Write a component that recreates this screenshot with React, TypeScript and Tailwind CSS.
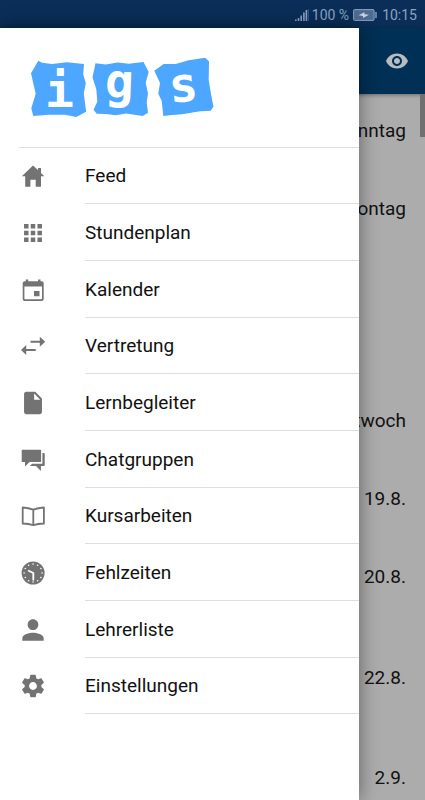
import type { ReactNode } from "react";

interface iconProps {
  children: ReactNode;
  viewBox?: string;
}

const Icon = ({ children, viewBox = "-0.5 -0.5 28 28" }: iconProps) => {
  return (
    <svg viewBox={viewBox} className="w-7 h-7 fill-current" aria-hidden="true">
      {children}
    </svg>
  );
};

const clockDots = Array.from({ length: 12 }, (_, i) => {
  const angle = (i * Math.PI) / 6;
  return { x: 13.6 + 9 * Math.sin(angle), y: 13.5 - 9 * Math.cos(angle) };
});

const menuItems = [
  {
    label: "Feed",
    icon: (
      <Icon>
        <path d="M13.5 2.9 2.3 13.7h3.4v10.6h5.2v-7h5.3v7h5.3V13.7h3.3l-3.3-3.2V5.4h-2.9v2.4z" />
      </Icon>
    ),
  },
  {
    label: "Stundenplan",
    icon: (
      <Icon viewBox="-0.5 -0.5 25 25">
        <path d="M4 8h4V4H4v4zm6 12h4v-4h-4v4zm-6 0h4v-4H4v4zm0-6h4v-4H4v4zm6 0h4v-4h-4v4zm6-10v4h4V4h-4zm-6 4h4V4h-4v4zm6 6h4v-4h-4v4zm0 6h4v-4h-4v4z" />
      </Icon>
    ),
  },
  {
    label: "Kalender",
    icon: (
      <Icon>
        <path
          fillRule="evenodd"
          d="M6.3 3h2.4v1.8h9.9V3H21v1.8h1.2a2 2 0 0 1 2 2v15.7a2 2 0 0 1-2 2h-17a2 2 0 0 1-2-2V6.8a2 2 0 0 1 2-2h1.1zM4.9 9.9v12a.8.8 0 0 0 .8.8h16a.8.8 0 0 0 .8-.8v-12zM14.5 14.5H20v5.3h-5.5z"
        />
      </Icon>
    ),
  },
  {
    label: "Vertretung",
    icon: (
      <Icon>
        <path d="M25.7 9.2 20.3 4.2v4H11v2.1h9.3v4zM1.5 17.5l5.2-5v4h9.5v2.1H6.7v4z" />
      </Icon>
    ),
  },
  {
    label: "Lernbegleiter",
    icon: (
      <Icon viewBox="-0.5 -0.5 25 25">
        <path d="M6 2c-1.1 0-1.99.9-1.99 2L4 20c0 1.1.89 2 1.99 2H18c1.1 0 2-.9 2-2V8l-6-6H6zm7 7V3.5L18.5 9H13z" />
      </Icon>
    ),
  },
  {
    label: "Chatgruppen",
    icon: (
      <Icon>
        <path d="M2.9 3.2h18a.7.7 0 0 1 .7.7v11a.7.7 0 0 1-.7.7H10l-4.5 4.5v-4.5H2.9a.7.7 0 0 1-.7-.7v-11a.7.7 0 0 1 .7-.7z" />
        <path d="M22.9 6.5h1.5a.8.8 0 0 1 .8.8v11.5a.8.8 0 0 1-.8.8h-3v4.9l-4.9-4.9h-6.2l2.4-2.4h10.2z" />
      </Icon>
    ),
  },
  {
    label: "Kursarbeiten",
    icon: (
      <Icon>
        <path
          d="M13.8 7.2C10.5 5.9 7 5.2 3.2 5v16c3.8.2 7.3.7 10.6 1.6 3.2-.9 6.7-1.4 10.6-1.6V5c-3.9.2-7.4.9-10.6 2.2zm0 0v15.4"
          fill="none"
          stroke="currentColor"
          strokeWidth="1.8"
          strokeLinejoin="round"
        />
      </Icon>
    ),
  },
  {
    label: "Fehlzeiten",
    icon: (
      <Icon>
        <circle cx="13.6" cy="13.5" r="11.5" />
        {clockDots.map((dot, i) => (
          <circle key={i} cx={dot.x} cy={dot.y} r="0.8" fill="#fff" />
        ))}
        <path
          d="M8.6 11l5.2 2.5v7.4"
          fill="none"
          stroke="#fff"
          strokeWidth="1.8"
        />
      </Icon>
    ),
  },
  {
    label: "Lehrerliste",
    icon: (
      <Icon viewBox="1.5 1.5 21 21">
        <path d="M12 12c2.21 0 4-1.79 4-4s-1.79-4-4-4-4 1.79-4 4 1.79 4 4 4zm0 2c-2.67 0-8 1.34-8 4v2h16v-2c0-2.66-5.33-4-8-4z" />
      </Icon>
    ),
  },
  {
    label: "Einstellungen",
    icon: (
      <Icon viewBox="-0.5 -0.5 25 25">
        <path d="M19.43 12.98c.04-.32.07-.64.07-.98s-.03-.66-.07-.98l2.11-1.65c.19-.15.24-.42.12-.64l-2-3.46c-.12-.22-.39-.3-.61-.22l-2.49 1c-.52-.4-1.08-.73-1.69-.98l-.38-2.65C14.46 2.18 14.25 2 14 2h-4c-.25 0-.46.18-.49.42l-.38 2.65c-.61.25-1.17.59-1.69.98l-2.49-1c-.23-.09-.49 0-.61.22l-2 3.46c-.13.22-.07.49.12.64l2.11 1.65c-.04.32-.07.65-.07.98s.03.66.07.98l-2.11 1.65c-.19.15-.24.42-.12.64l2 3.46c.12.22.39.3.61.22l2.49-1c.52.4 1.08.73 1.69.98l.38 2.65c.03.24.24.42.49.42h4c.25 0 .46-.18.49-.42l.38-2.65c.61-.25 1.17-.59 1.69-.98l2.49 1c.23.09.49 0 .61-.22l2-3.46c.12-.22.07-.49-.12-.64l-2.11-1.65zM12 15.5c-1.93 0-3.5-1.57-3.5-3.5s1.57-3.5 3.5-3.5 3.5 1.57 3.5 3.5-1.57 3.5-3.5 3.5z" />
      </Icon>
    ),
  },
];

const days = [
  { label: "Sonntag", gap: "pt-[25px]" },
  { label: "Montag", gap: "pt-[54px]" },
  { label: "Mittwoch", gap: "pt-[188px]" },
  { label: "19.8.", gap: "pt-[54px]" },
  { label: "20.8.", gap: "pt-[54px]" },
  { label: "22.8.", gap: "pt-[77px]" },
  { label: "2.9.", gap: "pt-[76px]" },
];

const Logo = () => {
  return (
    <svg
      viewBox="30 16 186 80"
      className="w-[186px] h-20"
      role="img"
      aria-label="igs"
    >
      <g fill="#4da6ff">
        <path d="M38.3 30.7 42 32.7 52 34l15-1.7 17 1.7-.8 10.3 2.6 9-2 10 2.3 18.5L76.3 87 65 84.7H49L33.3 86l-2-7.7 4.4-14.6L31 43.3z" />
        <path d="M95.5 33.3l10.2 1.2 12-2 11 1.3 14.8-1.9 5.2 10.1-3 10.7 2.3 10.8-1.3 8.5 1.3 10.8-5.3 3.2-16.4-2.5-10.6 1.8-10-1.3-9-.2-3.2-4 3.8-8-1-12.6-3.8-12z" />
        <path d="M154.3 40.7l9.4-6.7h12l13-3.7 16.3-2.5 4 3.5-.3 18.7 2.5 15.3 2.3 11.4-2.8 4-10.4.6-18.3 3-10 .7-8.7 1-1.6-15.3-3.4-7 1.7-10.7z" />
      </g>
      <g
        fill="#fff"
        fontFamily="'DejaVu Sans Mono', monospace"
        fontWeight="700"
        fontSize="48"
      >
        <text x="45" y="76.5">
          i
        </text>
        <text x="105" y="68" transform="rotate(2 119 55)">
          g
        </text>
        <text x="169" y="71.5" transform="rotate(-5 183 58)">
          s
        </text>
      </g>
    </svg>
  );
};

const StatusBar = () => {
  return (
    <div className="h-7 shrink-0 flex items-center justify-end pr-2 pt-0.5 bg-[#0a2e58] text-[#8ba4c6] text-sm">
      <svg viewBox="0 0 14 13" className="w-3.5 h-[13px] fill-current">
        <path d="M0 10.5h1.6V12H0zM2.7 9h1.6v3H2.7zM5.4 6.5H7V12H5.4zM8.1 3.5h1.6V12H8.1zM10.6 1h1.6v11h-1.6z" />
        <path d="M12.8 0h1.2v12h-1.2z" opacity="0.3" />
      </svg>
      <span className="ml-[3px]">100 %</span>
      <svg viewBox="0 0 24 12" className="ml-1 w-6 h-3">
        <rect
          x="0.6"
          y="0.6"
          width="20.5"
          height="10.8"
          rx="1"
          fill="#4e6b91"
          stroke="#8ba4c6"
        />
        <path d="M22.3 3h1.4v6h-1.4z" fill="#8ba4c6" />
        <path d="M5.5 6.3l6-3.1v2l4.5.5-6 3.2v-2z" fill="#c6d5e8" />
      </svg>
      <span className="ml-[5px]">10:15</span>
    </div>
  );
};

const Drawer = () => {
  return (
    <aside className="absolute top-7 bottom-0 left-0 w-[84.5%] bg-white shadow-[0_0_18px_rgba(0,0,0,0.45)]">
      <div className="ml-[19px] h-[120px] border-b border-[#dedede] pt-[18px] pl-[11px]">
        <Logo />
      </div>
      <nav>
        <ul>
          {menuItems.map((item) => (
            <li key={item.label} className="h-[57px] nth-[3n+1]:h-14">
              <a href="#" className="flex h-full pl-[19px] text-[#737373]">
                <span className="w-7 flex items-center">{item.icon}</span>
                <span className="ml-[38px] pt-0.5 flex-1 flex items-center border-b border-[#dedede] text-[19px] text-[#111]">
                  {item.label}
                </span>
              </a>
            </li>
          ))}
        </ul>
      </nav>
    </aside>
  );
};

export default function App() {
  return (
    <div className="relative h-screen overflow-hidden flex flex-col bg-[#acacac] font-[Roboto,sans-serif]">
      <StatusBar />
      <header className="h-[66px] shrink-0 flex items-center justify-end pr-4 bg-[#003055] shadow-[0_1px_4px_rgba(0,0,0,0.4)]">
        <button type="button" aria-label="Anzeigen" className="text-[#b8bcc0]">
          <svg viewBox="0 0 24 24" className="w-6 h-6 fill-current">
            <path d="M12 4.5C7 4.5 2.73 7.61 1 12c1.73 4.39 6 7.5 11 7.5s9.27-3.11 11-7.5c-1.73-4.39-6-7.5-11-7.5zM12 17c-2.76 0-5-2.24-5-5s2.24-5 5-5 5 2.24 5 5-2.24 5-5 5zm0-8c-1.66 0-3 1.34-3 3s1.34 3 3 3 3-1.34 3-3-1.34-3-3-3z" />
          </svg>
        </button>
      </header>
      <main className="flex-1 min-h-0 flex justify-end">
        <ul className="pr-3.5 text-right text-[19px] leading-6 text-[#111]">
          {days.map((day) => (
            <li key={day.label} className={day.gap}>
              {day.label}
            </li>
          ))}
        </ul>
        <div className="w-[5px] h-[43px] bg-[#707070]" />
      </main>
      <Drawer />
    </div>
  );
}
